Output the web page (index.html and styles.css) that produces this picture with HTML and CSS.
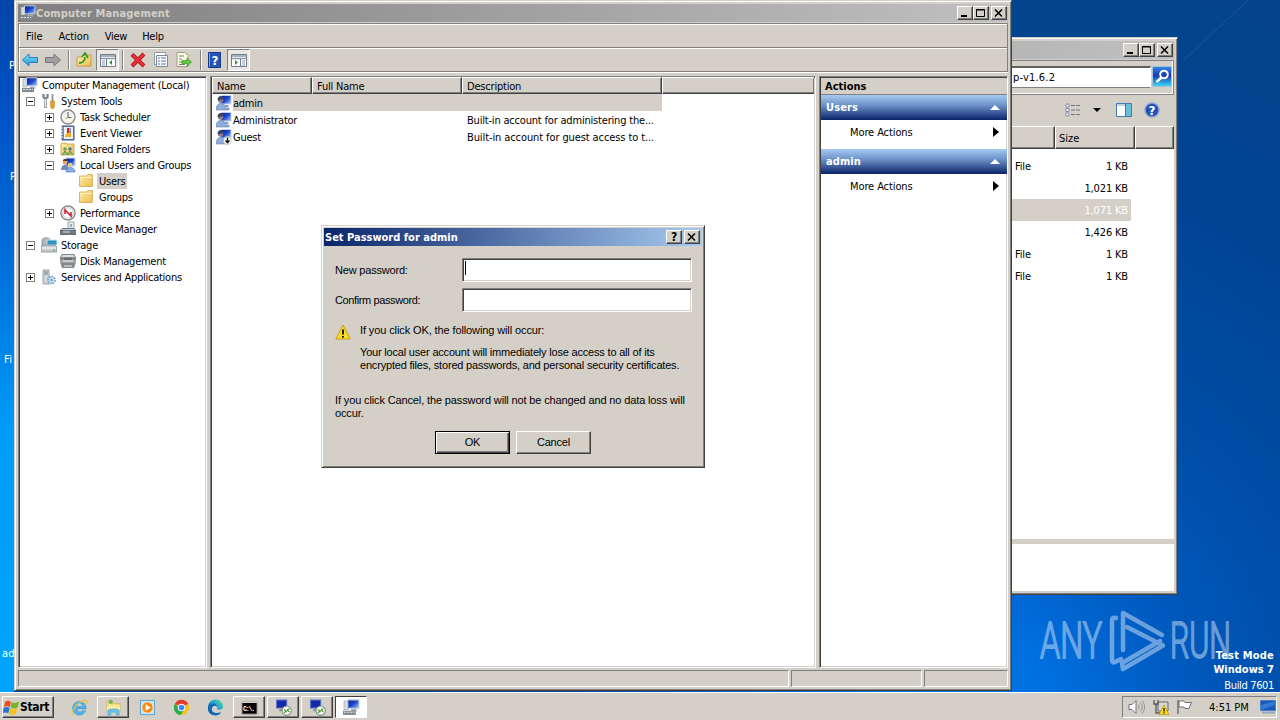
FILE: index.html
```html
<!DOCTYPE html>
<html lang="en">
<head>
    <meta charset="UTF-8">
    <title>Computer Management</title>
    <link rel="stylesheet" href="styles.css">
</head>
<body>
<svg class="defs" width="0" height="0">
    <defs>
        <linearGradient id="screen" x1="0" y1="0" x2="1" y2="1"><stop offset="0" stop-color="#0a1c90"/><stop offset=".5" stop-color="#1c48d0"/><stop offset="1" stop-color="#a8d0f8"/></linearGradient>
        <linearGradient id="folderFill" x1="0" y1="0" x2="1" y2="1"><stop offset="0" stop-color="#fff0b0"/><stop offset="1" stop-color="#e8bc50"/></linearGradient>
        <linearGradient id="edgeFill" x1="0" y1="1" x2="1" y2="0"><stop offset="0" stop-color="#0c59a4"/><stop offset=".5" stop-color="#1b9de2"/><stop offset="1" stop-color="#5edc7a"/></linearGradient>
        <linearGradient id="blueArrow" x1="0" y1="0" x2="0" y2="1"><stop offset="0" stop-color="#8ae0f8"/><stop offset="1" stop-color="#1a94d8"/></linearGradient>
    </defs>
    <symbol id="i-computer" viewBox="0 0 16 16">
        <path d="M1 2h4v8H1z" fill="#d8dce0" stroke="#909aa4" stroke-width=".6"/>
        <path d="M4.500.8h10.500v8H4.500z" fill="url(#screen)" stroke="#c8ccd4"/>
        <path d="M8 9.500h4l2 2H7z" fill="#a8acb4"/>
        <path d="M0 11h12v4H0z" fill="#808890"/><path d="M1 12.500h10" stroke="#e8e8e8" stroke-dasharray="2 1"/>
    </symbol>
    <symbol id="i-tools" viewBox="0 0 16 16">
        <path d="M2.500 1v3l2 2 2-2V1M4.500 5v10" fill="none" stroke="#808890" stroke-width="2.400"/><path d="M4.500 6v8" stroke="#e8ecf0"/>
        <path d="M11.500 1v7" stroke="#8c949c" stroke-width="1.800"/><path d="M9.700 8h3.600v6l-1 1.500h-1.600l-1-1.500z" fill="#f0a020" stroke="#b86c10" stroke-width=".6"/>
    </symbol>
    <symbol id="i-clock" viewBox="0 0 16 16">
        <circle cx="8" cy="8" r="7" fill="#f6f3e8" stroke="#8c8c8c" stroke-width="1.400"/><path d="M8 3v5.500h3.500" fill="none" stroke="#506890" stroke-width="1.100"/><path d="M8 8.500l-3 1" stroke="#e0b040"/>
    </symbol>
    <symbol id="i-event" viewBox="0 0 16 16">
        <path d="M2 1h12v14H2z" fill="#7088b0" stroke="#405880"/><path d="M4 2h9v12H4z" fill="#e8eef8"/><path d="M1 3h2M1 6h2M1 9h2M1 12h2" stroke="#fff"/><path d="M8 3v5M8 9v1" stroke="#d02020" stroke-width="2"/><path d="M6 9l5-3v6H5z" fill="#f0b020"/><path d="M10 3v5" stroke="#2858c8"/>
    </symbol>
    <symbol id="i-shared" viewBox="0 0 16 16">
        <path d="M1 3l1-1h4l1 1h7v11H1z" fill="url(#folderFill)" stroke="#c89838" stroke-width=".8"/><circle cx="5" cy="8" r="1.800" fill="#70a040"/><circle cx="10" cy="8" r="1.800" fill="#4078c0"/><path d="M2 14l3-4 3 4M7 14l3-4 3 4" fill="#90c060" stroke="#487828" stroke-width=".7"/>
    </symbol>
    <symbol id="i-group" viewBox="0 0 16 16">
        <path d="M6 1h9v8H6z" fill="url(#screen)" stroke="#d0d8e8"/><circle cx="5" cy="5" r="2.500" fill="#e0a868"/><path d="M1 13c0-7 8-7 8 0z" fill="#7088c0"/><circle cx="10" cy="8" r="2.300" fill="#e8c880"/><path d="M6 15c0-6 9-6 9 0z" fill="#88b0e8" stroke="#4870b8" stroke-width=".6"/><path d="M3 4c0-3 4-3 5 0z" fill="#604028"/>
    </symbol>
    <symbol id="i-folder" viewBox="0 0 16 16">
        <path d="M1.500 3h7l1-1.500h5v12h-13z" fill="url(#folderFill)" stroke="#d8b058" stroke-width=".9"/><path d="M2 4.500h12" stroke="#fff6cc" stroke-width=".8"/>
    </symbol>
    <symbol id="i-perf" viewBox="0 0 16 16">
        <circle cx="8" cy="8" r="7" fill="#fff" stroke="#888c8c" stroke-width="1.500"/><circle cx="8" cy="8" r="5.200" fill="none" stroke="#c8d0cc"/><path d="M5 9V5l6 6V7" fill="none" stroke="#d81830" stroke-width="1.600"/>
    </symbol>
    <symbol id="i-device" viewBox="0 0 16 16">
        <path d="M8 1h6v8H8z" fill="#e8eaee" stroke="#8c949c" stroke-width=".8"/><path d="M10 3h2v3h-2z" fill="#a0a8b0"/><path d="M0 9l3-2h10l3 2v5H0z" fill="#687480"/><path d="M1 9l2-1h10l2 1z" fill="#c4ccd4"/><path d="M3 11h7" stroke="#dce4ec"/><path d="M13 11h1" stroke="#70e060"/>
    </symbol>
    <symbol id="i-storage" viewBox="0 0 16 16">
        <path d="M1 3c0-3 8-3 8 0v7H1z" fill="#b0b8c0" stroke="#808890" stroke-width=".7"/><path d="M6 3h10v5H6z" fill="#2898c8" stroke="#c8e0ec"/><path d="M0 10l2-2h12l2 2v5H0z" fill="#c8ccd0" stroke="#747c84" stroke-width=".7"/><path d="M1 11h14" stroke="#fff"/><path d="M12 13h2" stroke="#38b838"/>
    </symbol>
    <symbol id="i-disk" viewBox="0 0 16 16">
        <path d="M0 4l2-3h12l2 3v5l-2 6H2L0 9z" fill="#848a8e"/><path d="M1 4l2-2h10l2 2z" fill="#d8dcde"/><path d="M0 7h16v3H0z" fill="#a0a6aa"/><path d="M3 8h10M4 13h8" stroke="#f0f0f0"/><path d="M4 6h8" stroke="#484c50"/>
    </symbol>
    <symbol id="i-services" viewBox="0 0 16 16">
        <path d="M2 1h6v14H2z" fill="#d0d6dc" stroke="#88929c" stroke-width=".8"/><path d="M3 3h4M3 5h4" stroke="#707c88"/><circle cx="10.500" cy="11" r="3.300" fill="#f0f8fc" stroke="#80b0d0" stroke-width="2.400" stroke-dasharray="1.800 .7"/><circle cx="10.500" cy="11" r="1.200" fill="#5890b8"/>
    </symbol>
    <symbol id="i-user" viewBox="0 0 16 16">
        <path d="M5 .5h10v8.500H5z" fill="url(#screen)" stroke="#c4d0e4"/><path d="M9 10h3l1 2H8z" fill="#90a0b8"/><circle cx="4.500" cy="5" r="2.700" fill="#8c7c88"/><path d="M1.500 5c0-5 6-5 6-1l-4 1z" fill="#3c4460"/><path d="M0 15c0-9 9-8 10-2h3v2z" fill="#90acd8" stroke="#6884b8" stroke-width=".6"/>
    </symbol>
    <symbol id="i-guest" viewBox="0 0 16 16">
        <use href="#i-user"/><circle cx="11.500" cy="11.500" r="4" fill="#fff" stroke="#b0b0b0" stroke-width=".7"/><path d="M11.500 8.500v5M9.500 11.500l2 2.300 2-2.300" fill="none" stroke="#111" stroke-width="1.400"/>
    </symbol>
    <symbol id="i-remote" viewBox="0 0 16 16">
        <path d="M1.500 1h9.500v7.500H1.500z" fill="#1428a8" stroke="#5870c8"/><path d="M4 9.500h5v2H4z" fill="#8890a0"/><circle cx="11" cy="11" r="4.400" fill="#f4f8ec" stroke="#80907c"/><path d="M8.500 10l2 1.500-2 1.500M13.500 9l-2 1.500 2 1.500" fill="none" stroke="#389830" stroke-width="1.100"/>
    </symbol>
</svg>

<div class="desktop">
    <span class="desk-label r1">P</span>
    <span class="desk-label r2">P</span>
    <span class="desk-label r3">Fi</span>
    <span class="desk-label r4">ad</span>

    <!-- Explorer window -->
    <div class="window explorer">
        <div class="titlebar inactive">
            <div class="caption-btns">
                <span class="cap"><svg viewBox="0 0 12 10"><path d="M2 8h6" stroke="#000" stroke-width="2"/></svg></span><span class="cap"><svg viewBox="0 0 12 10"><path d="M1.500 1.500h8v7h-8zM1 2h9" fill="none" stroke="#000"/></svg></span><span class="cap close"><svg viewBox="0 0 12 10"><path d="M2 1.500l7 7M9 1.500l-7 7" stroke="#000" stroke-width="1.500"/></svg></span>
            </div>
        </div>
        <div class="address">
            <div class="address-input">p-v1.6.2</div>
            <div class="search-btn"><svg width="19" height="19" viewBox="0 0 19 19"><circle cx="11" cy="7.500" r="3.800" fill="none" stroke="#fff" stroke-width="2"/><path d="M8.500 10.500l-5 4.500" stroke="#fff" stroke-width="2.400"/></svg></div>
        </div>
        <div class="ex-tools">
            <svg width="15" height="14" viewBox="0 0 15 14"><path d="M1 1h3v3H1zM1 5.500h3v3H1zM1 10h3v3H1z" fill="#fff" stroke="#7c84a0" stroke-width=".9"/><path d="M6 2.500h4M11 2.500h4M6 7h4M11 7h4M6 11.500h4M11 11.500h4" stroke="#70747c"/></svg>
            <svg class="drop" width="8" height="4" viewBox="0 0 8 4"><path d="M0 0h8L4 4z"/></svg>
            <svg class="pane" width="16" height="14" viewBox="0 0 16 14"><path d="M.5.500h15v13H.5z" fill="#fff" stroke="#4878b0"/><path d="M1 2h9" stroke="#80a8d0"/><path d="M10 1h5v12h-5z" fill="#68c0d8"/><path d="M9.500 1v12" stroke="#4878b0"/></svg>
            <svg width="16" height="16" viewBox="0 0 16 16"><circle cx="8" cy="8" r="7" fill="#2050b8" stroke="#8ca4cc" stroke-width="1.500"/><text x="8" y="12.500" text-anchor="middle" class="qmark">?</text></svg>
        </div>
        <div class="ex-head"><span class="hcell c1"></span><span class="hcell c2">Size</span><span class="hcell c3"></span></div>
        <div class="ex-list">
            <div class="ex-row"><span>File</span><span>1 KB</span></div>
            <div class="ex-row"><span></span><span>1,021 KB</span></div>
            <div class="ex-row sel"><span></span><span>1,071 KB</span></div>
            <div class="ex-row"><span></span><span>1,426 KB</span></div>
            <div class="ex-row"><span>File</span><span>1 KB</span></div>
            <div class="ex-row"><span>File</span><span>1 KB</span></div>
        </div>
        <div class="ex-details"></div>
    </div>

    <svg class="watermark" width="220" height="76" viewBox="0 0 220 76">
        <text x="4" y="50" textLength="62" lengthAdjust="spacingAndGlyphs">ANY</text>
        <g fill="none" stroke-width="4.500" stroke-linejoin="round" stroke-linecap="round">
            <path d="M80 10c-3-1-4 0-4 3v39c0 2 1 3 3 2l6-3"/>
            <path d="M87 42V5l39 22"/>
            <path d="M91 19l36 18.500L87 61l-1-6 38-22"/>
        </g>
        <text x="134" y="50" textLength="61" lengthAdjust="spacingAndGlyphs">RUN</text>
    </svg>
    <div class="build">
        <b>Test Mode</b>
        <b>Windows 7</b>
        <span>Build 7601</span>
    </div>

    <!-- Computer Management -->
    <div class="window main">
        <div class="titlebar inactive">
            <svg class="ico" viewBox="0 0 16 16"><use href="#i-computer"/></svg>
            <span class="caption">Computer Management</span>
            <div class="caption-btns">
                <span class="cap"><svg viewBox="0 0 12 10"><path d="M2 8h6" stroke="#000" stroke-width="2"/></svg></span><span class="cap"><svg viewBox="0 0 12 10"><path d="M1.500 1.500h8v7h-8zM1 2h9" fill="none" stroke="#000"/></svg></span><span class="cap close"><svg viewBox="0 0 12 10"><path d="M2 1.500l7 7M9 1.500l-7 7" stroke="#000" stroke-width="1.500"/></svg></span>
            </div>
        </div>
        <div class="bars">
            <div class="menu"><span class="m1">File</span><span class="m2">Action</span><span class="m3">View</span><span class="m4">Help</span></div>
            <div class="toolbar">
                <svg class="tb" viewBox="0 0 16 16"><path d="M.5 8l6.500-6v3.500h8.500v5H7V14z" fill="url(#blueArrow)" stroke="#1878b8" stroke-width=".9"/></svg>
                <svg class="tb t2" viewBox="0 0 16 16"><path d="M15.500 8L9 2v3.500H.5v5H9V14z" fill="#a0a0a0" stroke="#707070" stroke-width=".9"/></svg>
                <i class="sep s1"></i>
                <svg class="tb t3" viewBox="0 0 16 16"><path d="M1 5h5l1-2h8v11H1z" fill="url(#folderFill)" stroke="#c09438" stroke-width=".8"/><path d="M3 11c4 0 6-3 6-6M6 5l3-4 3 5" fill="none" stroke="#389828" stroke-width="1.800"/></svg>
                <span class="pressed"><svg viewBox="0 0 16 16"><path d="M.5 1.500h15v12H.5z" fill="#fff" stroke="#707c88"/><path d="M1 3h14M1 5.500h14" stroke="#889cac" stroke-width="1.300"/><path d="M6.500 6v7" stroke="#707c88"/><path d="M2 8h3M2 10h3M2 12h3" stroke="#7c9cc0"/><path d="M12 7v5L9 9.500z" fill="#309830"/></svg></span>
                <i class="sep s2"></i>
                <svg class="tb t4" viewBox="0 0 16 16"><path d="M2 2.500l12 11.500M14 2L2 14" stroke="#a81018" stroke-width="4"/><path d="M2.500 3l11 10.500M13.500 2.500L2.500 13.500" stroke="#e83038" stroke-width="2.500"/></svg>
                <svg class="tb t5" viewBox="0 0 16 16"><path d="M1.500.5h11v12h-11z" fill="#fff" stroke="#9098a8"/><path d="M3.500 3.500h11v11h-11z" fill="#f8fafc" stroke="#7c8898"/><path d="M5 6h2M8 6h5M5 9h2M8 9h5M5 12h2M8 12h5" stroke="#5878a8"/></svg>
                <svg class="tb t6" viewBox="0 0 16 16"><path d="M1 .5h8l3 3v11H1z" fill="#fcfadc" stroke="#a09c80"/><path d="M3 4h5M3 7h3M3 10h3M3 12.500h6" stroke="#7078a0"/><path d="M6 8.500h5V6l4.500 4-4.500 4v-2.500H6z" fill="#60c840" stroke="#389820" stroke-width=".7"/></svg>
                <i class="sep s3"></i>
                <svg class="tb t7" viewBox="0 0 16 16"><path d="M1.500.5h12v15h-12z" fill="#2454b8" stroke="#183888"/><path d="M2.500 1v14" stroke="#7ca0e0"/><text x="8" y="12.500" text-anchor="middle" class="qmark">?</text></svg>
                <span class="pressed p2"><svg viewBox="0 0 16 16"><path d="M.5 1.500h15v12H.5z" fill="#fff" stroke="#707c88"/><path d="M1 3h14M1 5.500h14" stroke="#889cac" stroke-width="1.300"/><path d="M9.500 6v7" stroke="#707c88"/><path d="M11 8h3M11 10h3M11 12h3" stroke="#7c9cc0"/><path d="M4 7v5l3-2.500z" fill="#309830"/></svg></span>
            </div>
        </div>

        <div class="panes">
            <div class="pane-box tree">
                <div class="node root"><svg class="ico" viewBox="0 0 16 16"><use href="#i-computer"/></svg><span>Computer Management (Local)</span></div>
                <div class="node l1"><i class="box"></i><svg class="ico" viewBox="0 0 16 16"><use href="#i-tools"/></svg><span>System Tools</span></div>
                <div class="node l2"><i class="box plus"></i><svg class="ico" viewBox="0 0 16 16"><use href="#i-clock"/></svg><span>Task Scheduler</span></div>
                <div class="node l2"><i class="box plus"></i><svg class="ico" viewBox="0 0 16 16"><use href="#i-event"/></svg><span>Event Viewer</span></div>
                <div class="node l2"><i class="box plus"></i><svg class="ico" viewBox="0 0 16 16"><use href="#i-shared"/></svg><span>Shared Folders</span></div>
                <div class="node l2"><i class="box"></i><svg class="ico" viewBox="0 0 16 16"><use href="#i-group"/></svg><span>Local Users and Groups</span></div>
                <div class="node l3"><svg class="ico" viewBox="0 0 16 16"><use href="#i-folder"/></svg><span class="picked">Users</span></div>
                <div class="node l3"><svg class="ico" viewBox="0 0 16 16"><use href="#i-folder"/></svg><span>Groups</span></div>
                <div class="node l2"><i class="box plus"></i><svg class="ico" viewBox="0 0 16 16"><use href="#i-perf"/></svg><span>Performance</span></div>
                <div class="node l2"><i class="nobox"></i><svg class="ico" viewBox="0 0 16 16"><use href="#i-device"/></svg><span>Device Manager</span></div>
                <div class="node l1"><i class="box"></i><svg class="ico" viewBox="0 0 16 16"><use href="#i-storage"/></svg><span>Storage</span></div>
                <div class="node l2"><i class="nobox"></i><svg class="ico" viewBox="0 0 16 16"><use href="#i-disk"/></svg><span>Disk Management</span></div>
                <div class="node l1"><i class="box plus"></i><svg class="ico" viewBox="0 0 16 16"><use href="#i-services"/></svg><span>Services and Applications</span></div>
            </div>

            <div class="pane-box list">
                <div class="list-head"><span class="hcell w1">Name</span><span class="hcell w2">Full Name</span><span class="hcell w3">Description</span><span class="hcell w4"></span></div>
                <div class="user sel"><svg class="ico" viewBox="0 0 16 16"><use href="#i-user"/></svg><span class="uname">admin</span></div>
                <div class="user"><svg class="ico" viewBox="0 0 16 16"><use href="#i-user"/></svg><span class="uname">Administrator</span><span class="desc">Built-in account for administering the...</span></div>
                <div class="user"><svg class="ico" viewBox="0 0 16 16"><use href="#i-guest"/></svg><span class="uname">Guest</span><span class="desc guest">Built-in account for guest access to t...</span></div>
            </div>

            <div class="pane-box actions">
                <div class="act-title">Actions</div>
                <div class="act-head"><span>Users</span><svg width="10" height="5" viewBox="0 0 10 5"><path d="M0 5h10L5 0z" fill="#fff"/></svg></div>
                <div class="act-item"><span>More Actions</span><svg width="6" height="10" viewBox="0 0 6 10"><path d="M0 0v10l6-5z"/></svg></div>
                <div class="act-head"><span>admin</span><svg width="10" height="5" viewBox="0 0 10 5"><path d="M0 5h10L5 0z" fill="#fff"/></svg></div>
                <div class="act-item"><span>More Actions</span><svg width="6" height="10" viewBox="0 0 6 10"><path d="M0 0v10l6-5z"/></svg></div>
            </div>
        </div>
        <div class="status"><span class="st1"></span><span class="st2"></span><span class="st3"></span></div>
    </div>

    <!-- Password dialog -->
    <div class="window dialog">
        <div class="titlebar active">
            <span class="caption">Set Password for admin</span>
            <div class="caption-btns">
                <span class="cap help">?</span><span class="cap close"><svg viewBox="0 0 12 10"><path d="M2 1.500l7 7M9 1.500l-7 7" stroke="#000" stroke-width="1.500"/></svg></span>
            </div>
        </div>
        <div class="dlg-body">
            <div class="field"><label class="lb1">New password:</label><div class="input"><i class="caret"></i></div></div>
            <div class="field"><label class="lb2">Confirm password:</label><div class="input"></div></div>
            <div class="warn">
                <svg width="16" height="16" viewBox="0 0 16 16"><path d="M8 1l7.200 14H.8z" fill="#fcdc20" stroke="#c8a010" stroke-linejoin="round"/><path d="M8 5.500v5M8 12v1.800" stroke="#000" stroke-width="1.700"/></svg>
                <span>If you click OK, the following will occur:</span>
            </div>
            <p class="note">Your local user account will immediately lose access to all of its<br>encrypted files, stored passwords, and personal security certificates.</p>
            <p class="cancel-note">If you click Cancel, the password will not be changed and no data loss will<br>occur.</p>
            <div class="buttons"><span class="btn default">OK</span><span class="btn">Cancel</span></div>
        </div>
    </div>

    <!-- Taskbar -->
    <div class="taskbar">
        <div class="start">
            <svg width="17" height="17" viewBox="0 0 16 16"><path d="M2 2.500c2-1.500 4-1 5.500 0L6.500 7.500C5 6.500 3 6.500 1 7.500z" fill="#f05020"/><path d="M8.200 3c2 1 4 1 7-.3l-1.500 5.300c-2 1.200-4 1-6.500 0z" fill="#70b828"/><path d="M.6 8.400c2-1.200 4-1 5.700 0L5 13.500c-1.500-1-3.500-1-5.500 0z" fill="#2878d8"/><path d="M7 8.800c2 1.200 4.200 1 6.500 0l-1.400 5.200c-2 1-4 1-6.400-.2z" fill="#fcc018"/></svg>
            <b>Start</b>
        </div>
        <div class="tasks">
            <span class="task"><svg viewBox="0 0 18 18"><path d="M16 10.500H6a3.600 3.600 0 0 0 6.500 1.700l3 .3A7.200 7.200 0 1 1 16 10.500zM6 8h6.500A3.200 3.200 0 0 0 6 8z" fill="#50b4ec" stroke="#2c88c4" stroke-width=".5" fill-rule="evenodd"/><path d="M2 16.500C-1 13 7 3 15 1.500c2.500 0 2 2 1 3.500" fill="none" stroke="#e8c040" stroke-width="1.300"/></svg></span>
            <span class="task raised"><svg viewBox="0 0 18 18"><path d="M2 3h6l1 2h7v9H2z" fill="#f8e48c" stroke="#d0b050" stroke-width=".8"/><path d="M4 1h4v4H4z" fill="#70b850"/><path d="M2 8h14v7H2z" fill="#fcf0a8"/><path d="M3 17v-5c0-2 12-2 12 0v5h-3v-3H6v3z" fill="#70c0e8" stroke="#4898c8" stroke-width=".6"/></svg></span>
            <span class="task"><svg viewBox="0 0 18 18"><path d="M1.500 1.500h15v15h-15z" fill="#c0e4f8" stroke="#50a0d0"/><circle cx="9" cy="9" r="6" fill="#f88810" stroke="#fff" stroke-width=".7"/><path d="M7 5.500v7L12.500 9z" fill="#fff"/></svg></span>
            <span class="task"><svg viewBox="0 0 18 18"><circle cx="9" cy="9" r="8" fill="#fbc116"/><path d="M9 9L2 5a8 8 0 0 1 14 0z" fill="#e33b2e"/><path d="M2 5a8 8 0 0 0 6 12l4-6-5-1z" fill="#2da94f"/><path d="M9 5h7" stroke="#e33b2e" stroke-width="1"/><circle cx="9" cy="9" r="4" fill="#fff"/><circle cx="9" cy="9" r="3" fill="#4285f4"/></svg></span>
            <span class="task"><svg viewBox="0 0 18 18"><path d="M1 9a8 8 0 0 1 16-1c0 3-3 4-6 3-1-.5 0-1-.2-2C10 6 5 6 5 11c0 3 4 6 9 4A8 8 0 0 1 1 9z" fill="url(#edgeFill)"/><path d="M1 9c1-5 8-6 10-1C8 6 5 8 5 11c0 3 4 5 10 3C12 20 0 18 1 9z" fill="#1268b4"/></svg></span>
            <span class="task raised"><svg viewBox="0 0 18 18"><path d="M1 3h16v13H1z" fill="#000" stroke="#a0a0a0"/><path d="M1 3.500h16" stroke="#d8d8d8" stroke-width="1.500"/><text x="2" y="12.500" class="cmd" textLength="13">C:\.</text></svg></span>
            <span class="task raised"><svg viewBox="0 0 16 16"><use href="#i-remote"/></svg></span>
            <span class="task raised"><svg viewBox="0 0 16 16"><use href="#i-remote"/></svg></span>
            <span class="task down"><svg viewBox="0 0 16 16"><use href="#i-computer"/></svg></span>
        </div>
        <div class="tray">
            <svg width="17" height="16" viewBox="0 0 17 16"><path d="M1 5.500h3l4-4v13l-4-4H1z" fill="#fff" stroke="#707070"/><path d="M10 5.500c1.500 1.500 1.500 3.500 0 5M12 3.500c3 3 3 6 0 9M14 1.500c3.500 4 3.500 9 0 13" fill="none" stroke="#909090"/></svg>
            <svg class="net" width="16" height="16" viewBox="0 0 16 16"><path d="M5 3h10v9H5z" fill="#d8d8d0" stroke="#686868"/><path d="M1 1v4h4V1M3 5v9h5" fill="none" stroke="#585858" stroke-width="1.300"/><path d="M11 6l5 9.500H6z" fill="#fcdc20" stroke="#b89010" stroke-width=".7"/><path d="M11 9v3.500M11 13.300v1.200" stroke="#000" stroke-width="1.200"/></svg>
            <svg class="flag" width="17" height="16" viewBox="0 0 17 16"><path d="M2 1v14" stroke="#707070" stroke-width="1.500"/><path d="M3 2h5l1 1.500h6.500L13 9.500H9L8 8H3z" fill="#fff" stroke="#707070"/></svg>
            <span class="clock">4:51 PM</span>
            <svg class="show" width="16" height="14" viewBox="0 0 16 14"><path d="M.5.500h15v10H.5z" fill="#1858b8" stroke="#4880c8"/><path d="M1 10V5l14-4v4z" fill="#4890e0" opacity=".6"/><path d="M2 12.500h13" stroke="#90a8c0" stroke-width="2"/></svg>
        </div>
    </div>
</div>
</body>
</html>
```
FILE: styles.css
```css
* {
    box-sizing: border-box;
}
body {
    margin: 0;
    font-family: "DejaVu Sans Condensed", "DejaVu Sans", sans-serif;
    font-size: 11px;
    line-height: 13px;
    color: #000;
    white-space: nowrap;
}
svg {
    display: block;
    flex: none;
}
.defs {
    position: absolute;
}
.desktop {
    position: relative;
    width: 1280px;
    height: 720px;
    overflow: hidden;
    background:
        linear-gradient(180deg, #0246a8 0, #0050c4 100px, #0070dc 270px, #009cf8 430px, #00a4ff 700px) 0 0 / 14px 100% no-repeat,
        linear-gradient(137deg, transparent 49.300%, rgba(90,150,210,.22) 50%, transparent 50.700%) 1178px 0 / 76px 60px no-repeat,
        radial-gradient(circle at 960px 720px, #007cf0 0, #0070e0 90px, #0058bc 235px, #004da6 370px, #004494 560px, #05448c 780px);
}
.desk-label {
    position: absolute;
    color: #fff;
    letter-spacing: .300px;
}
.r1 { left: 9px; top: 59px; }
.r2 { left: 10px; top: 170px; }
.r3 { left: 4px; top: 353px; }
.r4 { left: 2px; top: 647px; }

/* window frame */
.window {
    position: absolute;
    background: #d4d0c8;
    border: 1px solid #404040;
    border-top-color: #d4d0c8;
    border-left-color: #d4d0c8;
    box-shadow: inset 1px 1px #fff, inset -1px -1px #808080;
    padding: 3px;
    display: flex;
    flex-direction: column;
}
.titlebar {
    flex: none;
    height: 18px;
    display: flex;
    align-items: center;
    padding: 0 2px;
    font-weight: bold;
    color: #d4d0c8;
}
.titlebar.inactive {
    background: linear-gradient(90deg, #808080, #c0c0c0);
    padding-right: 1px;
}
.titlebar.active {
    background: linear-gradient(90deg, #0a246a, #a6caf0);
    color: #fff;
    padding-left: 0;
}
.ico {
    width: 16px;
    height: 16px;
}
.caption {
    margin-left: 1px;
}
.main .caption {
    margin-left: 0;
    letter-spacing: .140px;
}
.caption-btns {
    margin-left: auto;
    display: flex;
}
.cap {
    width: 16px;
    height: 14px;
    background: #d4d0c8;
    border: 1px solid #404040;
    border-top-color: #fff;
    border-left-color: #fff;
    box-shadow: inset -1px -1px #808080;
    padding: 1px;
    color: #000;
}
.cap svg {
    width: 12px;
    height: 10px;
}
.cap.close {
    margin-left: 2px;
}
.cap.help {
    font-size: 12px;
    line-height: 11px;
    padding-left: 4px;
}
.hcell {
    background: #d4d0c8;
    border: 1px solid #404040;
    border-top-color: #fff;
    border-left-color: #fff;
    box-shadow: inset -1px -1px #808080;
    padding-left: 4px;
}

/* explorer */
.explorer {
    left: 900px;
    top: 37px;
    width: 278px;
    height: 558px;
}
.explorer .titlebar {
    background: linear-gradient(90deg, #b0b0b0, #c0c0c0);
}
.address {
    height: 35px;
    margin-top: 1px;
    border: 1px solid #808080;
    box-shadow: inset -1px -1px #fff;
    display: flex;
    padding: 5px 1px 0 0;
    flex: none;
}
.address-input {
    flex: 1;
    height: 22px;
    background: #fff;
    border: 1px solid #808080;
    border-top: 2px solid #606060;
    border-right-color: #fff;
    padding: 3px 0 0 107px;
    letter-spacing: .200px;
}
.search-btn {
    width: 20px;
    height: 21px;
    margin-left: 1px;
    background: linear-gradient(180deg, #3088e0, #1838b8 45%, #38d8f0);
    border: 1px solid #a8c0d8;
}
.ex-tools {
    flex: none;
    height: 31px;
    display: flex;
    align-items: center;
    padding: 0 0 2px 161px;
}
.ex-tools .drop { margin-left: 13px; }
.ex-tools .pane { margin: 0 12px 0 15px; }
.qmark {
    font: bold 12px "DejaVu Sans", sans-serif;
    fill: #fff;
}
.ex-head {
    flex: none;
    height: 23px;
    display: flex;
    line-height: 23px;
}
.c1 { width: 151px; }
.c2 { width: 80px; padding-left: 3px; }
.c3 { flex: 1; }
.ex-list {
    flex: none;
    height: 390px;
    background: #fff;
    padding-top: 6px;
}
.ex-row {
    width: 227px;
    height: 22px;
    line-height: 23px;
    letter-spacing: -.150px;
    display: flex;
    justify-content: space-between;
    padding: 0 3px 0 111px;
}
.ex-row.sel {
    background: #d4d0c8;
    color: #fff;
}
.ex-details {
    flex: 1;
    margin-top: 5px;
    background: #fff;
}

/* desktop overlays */
.watermark {
    position: absolute;
    left: 1036px;
    top: 608px;
    opacity: .5;
}
.watermark text {
    font: 300 50px Roboto, sans-serif;
    fill: #d4e4f8;
    stroke: #d4e4f8;
    stroke-width: 1.800px;
}
.watermark g {
    stroke: #d4e4f8;
}
.build {
    position: absolute;
    right: 6px;
    top: 649px;
    display: flex;
    flex-direction: column;
    align-items: flex-end;
    color: #fff;
    line-height: 14px;
}
.build b:first-child {
    letter-spacing: .200px;
}
.build span {
    margin-top: 2px;
    letter-spacing: -.350px;
}

/* main window */
.main {
    left: 14px;
    top: 0;
    width: 998px;
    height: 691px;
}
.bars {
    flex: none;
    margin-top: 1px;
    border: 1px solid #808080;
    box-shadow: 0 1px #fff, inset 1px 1px #fff;
    height: 49px;
}
.menu {
    height: 24px;
    display: flex;
    align-items: center;
    padding: 2px 0 0 7px;
    border-bottom: 1px solid #808080;
}
.m2 { margin-left: 16px; letter-spacing: -.100px; }
.m3 { margin-left: 16px; letter-spacing: -.300px; }
.m4 { margin-left: 15px; letter-spacing: -.200px; }
.toolbar {
    height: 23px;
    border-top: 1px solid #fff;
    display: flex;
    align-items: center;
    padding-left: 3px;
}
.tb {
    width: 16px;
    height: 16px;
}
.t2 { margin-left: 7px; }
.t3 { margin-left: 6px; }
.t4 { margin-left: 6px; }
.t5 { margin-left: 7px; }
.t6 { margin-left: 7px; }
.t7 { margin-left: 5px; }
.sep {
    width: 2px;
    height: 20px;
    border-left: 1px solid #808080;
    border-right: 1px solid #fff;
}
.s1 { margin-left: 7px; }
.s2 { margin-left: 3px; }
.s3 { margin-left: 8px; }
.pressed {
    width: 23px;
    height: 22px;
    margin-left: 4px;
    padding: 3px;
    background: #ebe8e4;
    border: 1px solid #808080;
    border-right-color: #fff;
    border-bottom-color: #fff;
}
.pressed svg {
    width: 16px;
    height: 16px;
}
.p2 { margin-left: 4px; }

.panes {
    flex: none;
    height: 592px;
    margin-top: 4px;
    display: flex;
    gap: 3px;
}
.pane-box {
    background: #fff;
    border: 1px solid #808080;
    border-right-color: #fff;
    border-bottom-color: #fff;
    box-shadow: inset 1px 1px #404040, inset -1px -1px #d4d0c8;
    padding: 0 1px;
}
.tree {
    width: 189px;
    letter-spacing: -.250px;
}
.list { width: 606px; }
.actions {
    flex: 1;
    padding: 1px 0 1px 1px;
}

.node {
    height: 16px;
    display: flex;
    align-items: center;
}
.node span {
    margin-left: 2px;
    padding: 0 2px;
}
.root { padding-left: 2px; }
.l1 { padding-left: 6px; }
.l2 { padding-left: 25px; }
.l3 { padding-left: 58px; }
.l1 .ico { margin-left: 6px; }
.l2 .ico { margin-left: 6px; }
.l3 .picked, .l3 span { margin-left: 3px; }
.node .picked {
    height: 16px;
    padding-top: 2px;
    background: #d4d0c8;
}
.nobox, .box {
    width: 9px;
    height: 9px;
    flex: none;
}
.box {
    border: 1px solid #808080;
    background: linear-gradient(#000, #000) 1px 3px / 5px 1px no-repeat;
}
.box.plus {
    background: linear-gradient(#000, #000) 1px 3px / 5px 1px no-repeat, linear-gradient(#000, #000) 3px 1px / 1px 5px no-repeat;
}

.list-head {
    height: 17px;
    display: flex;
    line-height: 17px;
    letter-spacing: -.200px;
}
.w1 { width: 100px; }
.w2 { width: 150px; }
.w3 { width: 200px; }
.w4 { flex: 1; border-right: 0; }
.user {
    height: 17px;
    width: 450px;
    display: flex;
    align-items: center;
    padding-left: 4px;
    line-height: 15px;
}
.user.sel {
    background: linear-gradient(90deg, #fff 21px, #d4d0c8 21px);
}
.uname {
    width: 235px;
    padding: 1px 0 0 1px;
    letter-spacing: -.250px;
}
.desc {
    padding-top: 1px;
    letter-spacing: -.190px;
}
.desc.guest {
    letter-spacing: -.100px;
}

.act-title {
    height: 17px;
    line-height: 17px;
    background: #d4d0c8;
    border-bottom: 1px solid #808080;
    font-weight: bold;
    padding-left: 4px;
}
.act-head {
    height: 25px;
    display: flex;
    align-items: center;
    justify-content: space-between;
    padding: 0 7px 0 5px;
    background: linear-gradient(180deg, #a6caf0 0, #6f94ca 40%, #0a246a);
    color: #fff;
    font-weight: bold;
    letter-spacing: .100px;
}
.act-item {
    height: 29px;
    display: flex;
    align-items: center;
    justify-content: space-between;
    padding: 0 8px 5px 29px;
    letter-spacing: -.100px;
}

.status {
    flex: none;
    height: 17px;
    margin-top: 2px;
    display: flex;
    gap: 2px;
}
.status span {
    border: 1px solid #808080;
    border-right-color: #fff;
    border-bottom-color: #fff;
}
.st1 { width: 771px; }
.st2 { width: 131px; }
.st3 { flex: 1; }

/* password dialog */
.dialog {
    left: 321px;
    top: 225px;
    width: 384px;
    height: 243px;
    padding: 2px;
}
.dlg-body {
    padding: 12px 10px 0 11px;
    font-family: "Liberation Sans", Arial, sans-serif;
    font-size: 11px;
    letter-spacing: -.190px;
}
.field {
    display: flex;
    height: 24px;
    margin-bottom: 6px;
}
.field label {
    width: 127px;
    padding-top: 6px;
}
.lb2 {
    letter-spacing: -.380px;
}
.input {
    width: 230px;
    height: 24px;
    background: #fff;
    border: 1px solid #808080;
    border-right-color: #fff;
    border-bottom-color: #fff;
    box-shadow: inset 1px 1px #404040, inset -1px -1px #d4d0c8;
    padding: 2px;
}
.caret {
    display: block;
    width: 1px;
    height: 14px;
    background: #000;
}
.warn {
    display: flex;
    gap: 9px;
    height: 16px;
    margin-top: 12px;
    letter-spacing: -.110px;
}
.note, .cancel-note {
    margin: 0;
}
.note {
    padding: 6px 0 0 25px;
}
.cancel-note {
    padding-top: 22px;
    letter-spacing: -.130px;
}
.buttons {
    display: flex;
    gap: 6px;
    padding: 11px 0 0 100px;
}
.btn {
    width: 75px;
    height: 23px;
    line-height: 20px;
    text-align: center;
    border: 1px solid #404040;
    border-top-color: #fff;
    border-left-color: #fff;
    box-shadow: inset -1px -1px #808080;
}
.btn.default {
    border-color: #000;
    box-shadow: inset 1px 1px #fff, inset -1px -1px #404040, inset -2px -2px #808080;
}

/* taskbar */
.taskbar {
    position: absolute;
    left: 0;
    top: 692px;
    width: 1280px;
    height: 28px;
    background: #d4d0c8;
    border-top: 1px solid #fff;
    display: flex;
    align-items: center;
    padding: 1px 3px 0 2px;
}
.start, .raised {
    border: 1px solid #404040;
    border-top-color: #fff;
    border-left-color: #fff;
    box-shadow: inset -1px -1px #808080;
}
.start {
    width: 52px;
    height: 22px;
    display: flex;
    align-items: center;
    font-size: 12px;
    letter-spacing: -.300px;
}
.tasks {
    display: flex;
    gap: 2px;
    margin-left: 9px;
}
.task {
    width: 32px;
    height: 22px;
    display: flex;
    align-items: center;
    justify-content: center;
}
.task svg {
    width: 17px;
    height: 17px;
}
.down {
    background: #fff;
    border: 1px solid #404040;
    border-right-color: #fff;
    border-bottom-color: #fff;
}
.cmd {
    font: bold 7px "Liberation Mono", monospace;
    fill: #fff;
}
.tray {
    margin-left: auto;
    width: 155px;
    height: 22px;
    border: 1px solid #808080;
    border-right-color: #fff;
    border-bottom-color: #fff;
    display: flex;
    align-items: center;
    padding-left: 5px;
}
.net { margin-left: 8px; }
.flag { margin-left: 7px; }
.clock { margin-left: 16px; }
.show { margin-left: auto; }
```
